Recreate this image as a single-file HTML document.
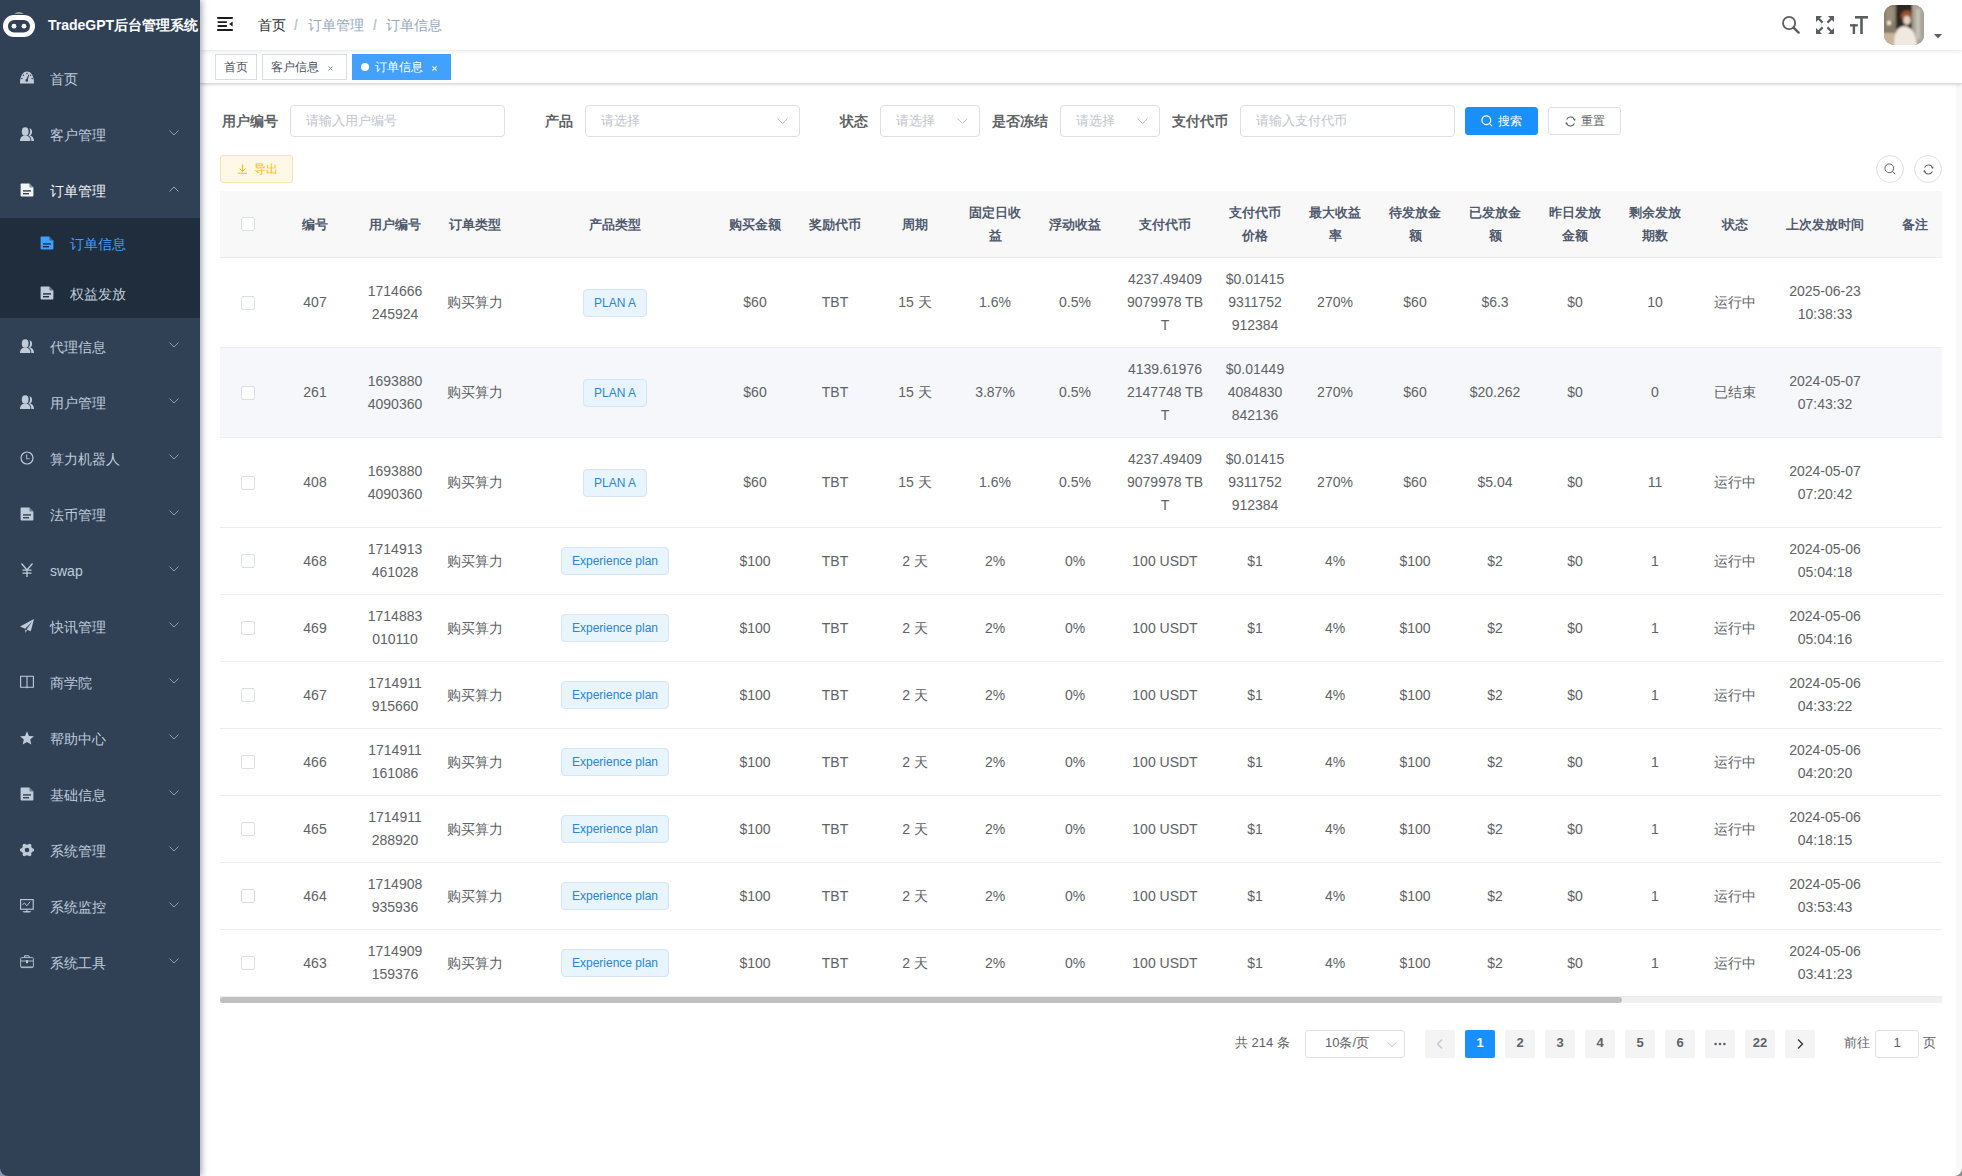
<!DOCTYPE html><html><head><meta charset="utf-8"><title>TradeGPT</title><style>
*{box-sizing:border-box}
html,body{margin:0;padding:0}
body{width:1962px;height:1176px;overflow:hidden;position:relative;background:#fff;font-family:"Liberation Sans",sans-serif;color:#606266}
.a{position:absolute}
#sb{left:0;top:0;width:200px;height:1176px;background:#304156;box-shadow:2px 0 6px rgba(0,21,41,.35);z-index:5}
.mi{position:absolute;left:0;width:200px;height:56px;color:#bfcbd9;font-size:14px}
.mi .ic{position:absolute;left:20px;top:21px;width:14px;height:14px}
.mi .tx{position:absolute;left:50px;top:1px;line-height:56px;white-space:nowrap}
.mi .ar{position:absolute;left:169px;top:24px;width:10px;height:6px}
.smi{position:absolute;left:0;width:200px;height:50px;color:#bfcbd9;font-size:14px}
.smi .ic{position:absolute;left:40px;top:18px;width:14px;height:14px}
.smi .tx{position:absolute;left:70px;top:1px;line-height:50px;white-space:nowrap}
#nb{left:200px;top:0;width:1762px;height:50px;background:#fff;box-shadow:0 1px 4px rgba(0,21,41,.12);z-index:3}
#tv{left:200px;top:50px;width:1762px;height:34px;background:#fff;border-bottom:1px solid #d9dadc;box-shadow:0 1px 3px 0 rgba(0,0,0,.12),0 0 3px 0 rgba(0,0,0,.04);z-index:2}
.tag{position:absolute;top:4px;height:26px;border:1px solid #d8dce5;color:#495060;background:#fff;font-size:12px;line-height:25px;padding:0 8px;white-space:nowrap}
.tag.act{background:#42a0ff;border-color:#42a0ff;color:#fff}
.lbl{position:absolute;top:105px;height:32px;line-height:32px;font-size:14px;font-weight:bold;color:#606266;white-space:nowrap}
.inp{position:absolute;top:105px;height:32px;border:1px solid #dcdfe6;border-radius:4px;background:#fff;font-size:13px;color:#c0c4cc;line-height:30px;padding-left:15px;white-space:nowrap}
.inp .ar{position:absolute;right:11px;top:12px;width:11px;height:6px}
.btn{position:absolute;height:28px;border-radius:3px;font-size:12px;line-height:26px;white-space:nowrap;border:1px solid #dcdfe6}
.circ{position:absolute;top:155px;width:28px;height:28px;border:1px solid #dcdfe6;border-radius:50%;background:#fff}
#tbl{left:220px;top:191px;width:1722px;height:812px;overflow:hidden}
.row{position:absolute;left:0;width:1735px;display:flex;border-bottom:1px solid #ebeef5;background:#fff}
.row.hd{background:#f8f8f9;color:#515a6e;font-weight:bold;font-size:13px}
.row.hv{background:#f5f7fa}
.c{display:flex;align-items:center;justify-content:center;text-align:center;line-height:23px;font-size:14px;color:#606266;flex:none}
.hd .c{font-size:13px;color:#515a6e;font-weight:bold}
.cb{width:14px;height:14px;border:1px solid #dcdfe6;border-radius:2px;background:#fff}
.etag{display:inline-block;height:28px;line-height:26px;padding:0 10px;font-size:12px;color:#2a86d4;background:#e8f4fe;border:1px solid #d5e5f3;border-radius:4px;white-space:nowrap}
.pg{position:absolute;top:1030px;height:28px;line-height:26px;font-size:13px;color:#606266;white-space:nowrap}
.pb{position:absolute;top:1030px;width:30px;height:28px;line-height:26px;background:#f4f4f5;border-radius:2px;text-align:center;font-size:13px;font-weight:bold;color:#606266}
.pb.on{background:#1890ff;color:#fff}
</style></head><body>
<div id="sb" class="a">
<svg class="a" style="left:2px;top:11px" width="34" height="28" viewBox="0 0 34 28"><path d="M12 2.5 Q17 0.6 22 2.5Z" fill="#fff"/><rect x="1" y="4" width="32" height="22" rx="11" ry="11" fill="#fff"/><rect x="6" y="9" width="22" height="12.5" rx="6.25" fill="#304156"/><circle cx="12" cy="15.2" r="2.4" fill="#fff"/><circle cx="22" cy="15.2" r="2.4" fill="#fff"/></svg>
<div class="a" style="left:48px;top:0;line-height:50px;font-size:14px;font-weight:bold;color:#fff;white-space:nowrap">TradeGPT后台管理系统</div>
<div class="mi" style="top:50px;color:#bfcbd9"><svg class="ic" viewBox="0 0 14 14"><path d="M0 12.4 C0 4.8 3 0.6 7 0.6 C11 0.6 14 4.8 14 12.4 Z" fill="#bfcbd9"/><g fill="#304156"><circle cx="7" cy="2.6" r="0.75"/><circle cx="3.4" cy="4.2" r="0.75"/><circle cx="10.6" cy="4.2" r="0.75"/><circle cx="1.9" cy="7.6" r="0.75"/><circle cx="12.1" cy="7.6" r="0.75"/><circle cx="6.8" cy="9.4" r="1.3"/><path d="M6.1 9.2 L8.4 3.6 L9.1 3.9 L7.5 9.7Z"/></g></svg><div class="tx">首页</div></div>
<div class="mi" style="top:106px;color:#bfcbd9"><svg class="ic" viewBox="0 0 14 14"><g fill="#bfcbd9"><ellipse cx="5.2" cy="4.5" rx="3.4" ry="4.3"/><path d="M0 14 C0 10 2.5 8.5 5.2 8.5 C8 8.5 10.4 10 10.4 14Z"/><path d="M9.5 1.2 C11.2 1.6 12.6 3.2 12 6 C11.6 7.4 10.8 8 10.2 8.4 C12.4 9 14 10.8 14 14 L11.4 14 C11.2 11 10.2 9.2 8.4 8.4 C9.6 7.4 10.4 5.6 10 3.2Z"/></g></svg><div class="tx">客户管理</div><svg class="ar" viewBox="0 0 10 6"><path d="M0.5 0.5 L5 5 L9.5 0.5" fill="none" stroke="#8e9aab" stroke-width="1"/></svg></div>
<div class="mi" style="top:162px;color:#f4f4f5"><svg class="ic" viewBox="0 0 14 14"><path d="M1.5 0.6 Q0.6 0.6 0.6 1.6 L0.6 12.6 Q0.6 13.6 1.6 13.6 L12.4 13.6 Q13.4 13.6 13.4 12.6 L13.4 4.6 L9.4 0.6Z" fill="#f4f4f5"/><path d="M9.4 0.6 L9.4 3.8 Q9.4 4.6 10.2 4.6 L13.4 4.6" fill="#304156" opacity="0.55"/><rect x="3" y="7.2" width="8" height="1.4" fill="#304156"/><rect x="3" y="10" width="6" height="1.4" fill="#304156"/></svg><div class="tx">订单管理</div><svg class="ar" viewBox="0 0 10 6"><path d="M0.5 5.5 L5 1 L9.5 5.5" fill="none" stroke="#9aa6b6" stroke-width="1"/></svg></div>
<div class="a" style="left:0;top:218px;width:200px;height:100px;background:#1f2d3d"></div>
<div class="smi" style="top:218px;color:#409eff"><svg class="ic" viewBox="0 0 14 14"><path d="M1.5 0.6 Q0.6 0.6 0.6 1.6 L0.6 12.6 Q0.6 13.6 1.6 13.6 L12.4 13.6 Q13.4 13.6 13.4 12.6 L13.4 4.6 L9.4 0.6Z" fill="#409eff"/><path d="M9.4 0.6 L9.4 3.8 Q9.4 4.6 10.2 4.6 L13.4 4.6" fill="#1f2d3d" opacity="0.55"/><rect x="3" y="7.2" width="8" height="1.4" fill="#1f2d3d"/><rect x="3" y="10" width="6" height="1.4" fill="#1f2d3d"/></svg><div class="tx">订单信息</div></div>
<div class="smi" style="top:268px"><svg class="ic" viewBox="0 0 14 14"><path d="M1.5 0.6 Q0.6 0.6 0.6 1.6 L0.6 12.6 Q0.6 13.6 1.6 13.6 L12.4 13.6 Q13.4 13.6 13.4 12.6 L13.4 4.6 L9.4 0.6Z" fill="#bfcbd9"/><path d="M9.4 0.6 L9.4 3.8 Q9.4 4.6 10.2 4.6 L13.4 4.6" fill="#1f2d3d" opacity="0.55"/><rect x="3" y="7.2" width="8" height="1.4" fill="#1f2d3d"/><rect x="3" y="10" width="6" height="1.4" fill="#1f2d3d"/></svg><div class="tx">权益发放</div></div>
<div class="mi" style="top:318px;color:#bfcbd9"><svg class="ic" viewBox="0 0 14 14"><g fill="#bfcbd9"><ellipse cx="5.2" cy="4.5" rx="3.4" ry="4.3"/><path d="M0 14 C0 10 2.5 8.5 5.2 8.5 C8 8.5 10.4 10 10.4 14Z"/><path d="M9.5 1.2 C11.2 1.6 12.6 3.2 12 6 C11.6 7.4 10.8 8 10.2 8.4 C12.4 9 14 10.8 14 14 L11.4 14 C11.2 11 10.2 9.2 8.4 8.4 C9.6 7.4 10.4 5.6 10 3.2Z"/></g></svg><div class="tx">代理信息</div><svg class="ar" viewBox="0 0 10 6"><path d="M0.5 0.5 L5 5 L9.5 0.5" fill="none" stroke="#8e9aab" stroke-width="1"/></svg></div>
<div class="mi" style="top:374px;color:#bfcbd9"><svg class="ic" viewBox="0 0 14 14"><g fill="#bfcbd9"><ellipse cx="5.2" cy="4.5" rx="3.4" ry="4.3"/><path d="M0 14 C0 10 2.5 8.5 5.2 8.5 C8 8.5 10.4 10 10.4 14Z"/><path d="M9.5 1.2 C11.2 1.6 12.6 3.2 12 6 C11.6 7.4 10.8 8 10.2 8.4 C12.4 9 14 10.8 14 14 L11.4 14 C11.2 11 10.2 9.2 8.4 8.4 C9.6 7.4 10.4 5.6 10 3.2Z"/></g></svg><div class="tx">用户管理</div><svg class="ar" viewBox="0 0 10 6"><path d="M0.5 0.5 L5 5 L9.5 0.5" fill="none" stroke="#8e9aab" stroke-width="1"/></svg></div>
<div class="mi" style="top:430px;color:#bfcbd9"><svg class="ic" viewBox="0 0 14 14"><circle cx="7" cy="7" r="6" fill="none" stroke="#bfcbd9" stroke-width="1.2"/><path d="M6.6 3.6 L6.6 7.8 L9.6 7.8" fill="none" stroke="#bfcbd9" stroke-width="1.1" opacity="0.8"/></svg><div class="tx">算力机器人</div><svg class="ar" viewBox="0 0 10 6"><path d="M0.5 0.5 L5 5 L9.5 0.5" fill="none" stroke="#8e9aab" stroke-width="1"/></svg></div>
<div class="mi" style="top:486px;color:#bfcbd9"><svg class="ic" viewBox="0 0 14 14"><path d="M1.5 0.6 Q0.6 0.6 0.6 1.6 L0.6 12.6 Q0.6 13.6 1.6 13.6 L12.4 13.6 Q13.4 13.6 13.4 12.6 L13.4 4.6 L9.4 0.6Z" fill="#bfcbd9"/><path d="M9.4 0.6 L9.4 3.8 Q9.4 4.6 10.2 4.6 L13.4 4.6" fill="#304156" opacity="0.55"/><rect x="3" y="7.2" width="8" height="1.4" fill="#304156"/><rect x="3" y="10" width="6" height="1.4" fill="#304156"/></svg><div class="tx">法币管理</div><svg class="ar" viewBox="0 0 10 6"><path d="M0.5 0.5 L5 5 L9.5 0.5" fill="none" stroke="#8e9aab" stroke-width="1"/></svg></div>
<div class="mi" style="top:542px;color:#bfcbd9"><svg class="ic" viewBox="0 0 14 14"><path d="M1.5 0.5 L7 7 L12.5 0.5 M7 7 L7 14 M2.5 7.2 L11.5 7.2 M2.5 10.2 L11.5 10.2" fill="none" stroke="#bfcbd9" stroke-width="1.3"/></svg><div class="tx">swap</div><svg class="ar" viewBox="0 0 10 6"><path d="M0.5 0.5 L5 5 L9.5 0.5" fill="none" stroke="#8e9aab" stroke-width="1"/></svg></div>
<div class="mi" style="top:598px;color:#bfcbd9"><svg class="ic" viewBox="0 0 14 14"><path d="M0 7.5 L14 0 L10.8 12.2 L6.6 10.4 L12.2 2.6 L5.2 9.8 Z M5.4 10.6 L5.2 14 L7 11.4Z" fill="#bfcbd9"/></svg><div class="tx">快讯管理</div><svg class="ar" viewBox="0 0 10 6"><path d="M0.5 0.5 L5 5 L9.5 0.5" fill="none" stroke="#8e9aab" stroke-width="1"/></svg></div>
<div class="mi" style="top:654px;color:#bfcbd9"><svg class="ic" viewBox="0 0 14 14"><path d="M0.6 1.2 L6.2 1.2 Q7 1.2 7 2 L7 12.8 Q7 12.2 6.2 12.2 L0.6 12.2 Z M13.4 1.2 L7.8 1.2 Q7 1.2 7 2 L7 12.8 Q7 12.2 7.8 12.2 L13.4 12.2 Z" fill="none" stroke="#bfcbd9" stroke-width="1.1" stroke-linejoin="round"/></svg><div class="tx">商学院</div><svg class="ar" viewBox="0 0 10 6"><path d="M0.5 0.5 L5 5 L9.5 0.5" fill="none" stroke="#8e9aab" stroke-width="1"/></svg></div>
<div class="mi" style="top:710px;color:#bfcbd9"><svg class="ic" viewBox="0 0 14 14"><path d="M7 0.3 L9 4.9 L13.9 5.3 L10.2 8.6 L11.3 13.5 L7 10.9 L2.7 13.5 L3.8 8.6 L0.1 5.3 L5 4.9Z" fill="#bfcbd9"/></svg><div class="tx">帮助中心</div><svg class="ar" viewBox="0 0 10 6"><path d="M0.5 0.5 L5 5 L9.5 0.5" fill="none" stroke="#8e9aab" stroke-width="1"/></svg></div>
<div class="mi" style="top:766px;color:#bfcbd9"><svg class="ic" viewBox="0 0 14 14"><path d="M1.5 0.6 Q0.6 0.6 0.6 1.6 L0.6 12.6 Q0.6 13.6 1.6 13.6 L12.4 13.6 Q13.4 13.6 13.4 12.6 L13.4 4.6 L9.4 0.6Z" fill="#bfcbd9"/><path d="M9.4 0.6 L9.4 3.8 Q9.4 4.6 10.2 4.6 L13.4 4.6" fill="#304156" opacity="0.55"/><rect x="3" y="7.2" width="8" height="1.4" fill="#304156"/><rect x="3" y="10" width="6" height="1.4" fill="#304156"/></svg><div class="tx">基础信息</div><svg class="ar" viewBox="0 0 10 6"><path d="M0.5 0.5 L5 5 L9.5 0.5" fill="none" stroke="#8e9aab" stroke-width="1"/></svg></div>
<div class="mi" style="top:822px;color:#bfcbd9"><svg class="ic" viewBox="0 0 14 14"><g fill="#bfcbd9"><circle cx="7" cy="7" r="5.4"/><circle cx="12.30" cy="7.00" r="1.75"/><circle cx="9.65" cy="11.59" r="1.75"/><circle cx="4.35" cy="11.59" r="1.75"/><circle cx="1.70" cy="7.00" r="1.75"/><circle cx="4.35" cy="2.41" r="1.75"/><circle cx="9.65" cy="2.41" r="1.75"/></g><circle cx="7" cy="7" r="2.3" fill="#304156"/></svg><div class="tx">系统管理</div><svg class="ar" viewBox="0 0 10 6"><path d="M0.5 0.5 L5 5 L9.5 0.5" fill="none" stroke="#8e9aab" stroke-width="1"/></svg></div>
<div class="mi" style="top:878px;color:#bfcbd9"><svg class="ic" viewBox="0 0 14 14"><rect x="0.6" y="0.6" width="12.6" height="9.6" fill="none" stroke="#bfcbd9" stroke-width="1.1"/><path d="M2.4 6 L4.4 3.8 L6.8 6.8 L10.2 2.6" fill="none" stroke="#bfcbd9" stroke-width="0.9"/><path d="M6.9 10.2 L6.9 12.6" stroke="#bfcbd9" stroke-width="1"/><ellipse cx="6.9" cy="12.8" rx="4.4" ry="0.8" fill="#bfcbd9"/></svg><div class="tx">系统监控</div><svg class="ar" viewBox="0 0 10 6"><path d="M0.5 0.5 L5 5 L9.5 0.5" fill="none" stroke="#8e9aab" stroke-width="1"/></svg></div>
<div class="mi" style="top:934px;color:#bfcbd9"><svg class="ic" viewBox="0 0 14 14"><path d="M4.6 2.6 L4.6 0.8 L8.8 0.8 L9.6 2.6" fill="none" stroke="#bfcbd9" stroke-width="1"/><rect x="0.6" y="2.6" width="12.8" height="10" rx="1" fill="none" stroke="#bfcbd9" stroke-width="1" opacity="0.85"/><path d="M0.8 6 L13.2 6" stroke="#bfcbd9" stroke-width="0.9"/><rect x="6" y="5.2" width="2" height="3" fill="#bfcbd9"/><rect x="1" y="11.2" width="12" height="1.4" fill="#bfcbd9" opacity="0.6"/></svg><div class="tx">系统工具</div><svg class="ar" viewBox="0 0 10 6"><path d="M0.5 0.5 L5 5 L9.5 0.5" fill="none" stroke="#8e9aab" stroke-width="1"/></svg></div>
</div>
<div id="nb" class="a">
<svg class="a" style="left:17px;top:17px" width="16" height="14" viewBox="0 0 16 14"><g fill="#1d1d1d"><rect x="0" y="0" width="16" height="1.9" rx="0.8"/><rect x="0.4" y="4.2" width="9.8" height="1.7" rx="0.8"/><rect x="0.4" y="8.1" width="9.8" height="1.8" rx="0.8"/><rect x="0" y="12.1" width="16" height="1.9" rx="0.8"/><path d="M15.6 4.4 L12.2 7 L15.6 9.5Z"/></g></svg>
<div class="a" style="left:58px;top:0;line-height:50px;font-size:14px;color:#303133;white-space:nowrap">首页</div>
<div class="a" style="left:94px;top:0;line-height:50px;font-size:14px;color:#c0c4cc;font-weight:bold">/</div>
<div class="a" style="left:108px;top:0;line-height:50px;font-size:14px;color:#97a8be;white-space:nowrap">订单管理</div>
<div class="a" style="left:173px;top:0;line-height:50px;font-size:14px;color:#c0c4cc;font-weight:bold">/</div>
<div class="a" style="left:186px;top:0;line-height:50px;font-size:14px;color:#97a8be;white-space:nowrap">订单信息</div>
<svg class="a" style="left:1582px;top:16px" width="18" height="18" viewBox="0 0 18 18"><circle cx="7.1" cy="7" r="6.1" fill="none" stroke="#5b5d61" stroke-width="1.8"/><path d="M11.6 11.6 L16.6 16.6" stroke="#5b5d61" stroke-width="2.4" stroke-linecap="round"/></svg>
<svg class="a" style="left:1616px;top:16px" width="18" height="18" viewBox="0 0 18 18"><g fill="#5b5d61"><path d="M0 0 L6 0 L0 6Z M18 0 L12 0 L18 6Z M0 18 L6 18 L0 12Z M18 18 L12 18 L18 12Z"/></g><g stroke="#5b5d61" stroke-width="2.2"><path d="M2 2 L6.6 6.6 M16 2 L11.4 6.6 M2 16 L6.6 11.4 M16 16 L11.4 11.4"/></g></svg>
<svg class="a" style="left:1650px;top:16px" width="18" height="18" viewBox="0 0 18 18"><g fill="#5b5d61"><rect x="5" y="0" width="13" height="2.6"/><rect x="10.2" y="0" width="2.6" height="18"/><rect x="0" y="8.2" width="7.8" height="2.3"/><rect x="2.7" y="8.2" width="2.4" height="9.8"/></g></svg>
<svg class="a" style="left:1684px;top:5px" width="40" height="40" viewBox="0 0 40 40"><defs><clipPath id="avc"><rect width="40" height="40" rx="10"/></clipPath><filter id="avb" x="-10%" y="-10%" width="120%" height="120%"><feGaussianBlur stdDeviation="0.9"/></filter></defs><g clip-path="url(#avc)"><rect width="40" height="40" fill="#8c8270"/><g filter="url(#avb)"><rect x="-2" y="-2" width="16" height="44" fill="#867a68"/><rect x="2" y="2" width="8" height="14" fill="#9a8f7c"/><rect x="12" y="-2" width="18" height="26" fill="#2e2620"/><rect x="28" y="-2" width="14" height="44" fill="#a8a498"/><rect x="32" y="4" width="4" height="30" fill="#c6c2b6"/><rect x="-2" y="28" width="16" height="14" fill="#c8b49a"/><circle cx="5" cy="18" r="2.2" fill="#f4ecd8"/><path d="M10 42 C10 30 12 22 20 21 C28 22 32 28 33 42Z" fill="#f0e9e0"/><ellipse cx="23" cy="15" rx="3.8" ry="5" fill="#e6d0c0"/><path d="M17 14 C16 8 20 5 24 5.5 C28 6.5 28.5 11 27 14 C25 10 21 9.5 17 14Z" fill="#9a5530"/></g></g></svg>
<svg class="a" style="left:1734px;top:34px" width="8" height="5" viewBox="0 0 8 5"><path d="M0 0 L8 0 L4 4.5Z" fill="#5a5e66"/></svg>
</div>
<div id="tv" class="a">
<div class="tag" style="left:15px">首页</div>
<div class="tag" style="left:62px;width:85px">客户信息<svg style="position:absolute;left:65px;top:11px" width="5" height="5" viewBox="0 0 5 5"><path d="M0.4 0.4 L4.6 4.6 M4.6 0.4 L0.4 4.6" stroke="#8a8f99" stroke-width="1"/></svg></div>
<div class="tag act" style="left:152px;width:99px"><span style="display:inline-block;width:8px;height:8px;border-radius:50%;background:#fff;margin-right:6px;vertical-align:0px"></span>订单信息<svg style="position:absolute;left:79px;top:11px" width="5" height="5" viewBox="0 0 5 5"><path d="M0.4 0.4 L4.6 4.6 M4.6 0.4 L0.4 4.6" stroke="#fff" stroke-width="1.1"/></svg></div>
</div>
<div class="lbl" style="left:222px">用户编号</div>
<div class="inp" style="left:290px;width:215px">请输入用户编号</div>
<div class="lbl" style="left:545px">产品</div>
<div class="inp" style="left:585px;width:215px">请选择<svg class="ar" viewBox="0 0 11 6"><path d="M0.5 0.5 L5.5 5.5 L10.5 0.5" fill="none" stroke="#c0c4cc" stroke-width="1"/></svg></div>
<div class="lbl" style="left:840px">状态</div>
<div class="inp" style="left:880px;width:100px">请选择<svg class="ar" viewBox="0 0 11 6"><path d="M0.5 0.5 L5.5 5.5 L10.5 0.5" fill="none" stroke="#c0c4cc" stroke-width="1"/></svg></div>
<div class="lbl" style="left:992px">是否冻结</div>
<div class="inp" style="left:1060px;width:100px">请选择<svg class="ar" viewBox="0 0 11 6"><path d="M0.5 0.5 L5.5 5.5 L10.5 0.5" fill="none" stroke="#c0c4cc" stroke-width="1"/></svg></div>
<div class="lbl" style="left:1172px">支付代币</div>
<div class="inp" style="left:1240px;width:215px">请输入支付代币</div>
<div class="btn" style="left:1465px;top:107px;width:73px;background:#1890ff;border-color:#1890ff;color:#fff"><svg class="a" style="left:15px;top:7px" width="12" height="12" viewBox="0 0 12 12"><circle cx="5.3" cy="5.3" r="4.4" fill="none" stroke="#fff" stroke-width="1.2"/><path d="M8.4 8.4 L10.8 10.8" stroke="#fff" stroke-width="1.2" stroke-linecap="round"/></svg><span class="a" style="left:32px;top:0">搜索</span></div>
<div class="btn" style="left:1548px;top:107px;width:73px;background:#fff;color:#606266"><svg class="a" style="left:16px;top:8px" width="11" height="11" viewBox="0 0 11 11"><path d="M9.6 4.2 A4.3 4.3 0 0 0 1.6 3.4" fill="none" stroke="#606266" stroke-width="1.1"/><path d="M1.4 6.8 A4.3 4.3 0 0 0 9.4 7.6" fill="none" stroke="#606266" stroke-width="1.1"/><path d="M8.2 3.6 L10 5 L10.6 2.8Z" fill="#606266"/><path d="M2.8 7.4 L1 6 L0.4 8.2Z" fill="#606266"/></svg><span class="a" style="left:32px;top:0">重置</span></div>
<div class="btn" style="left:220px;top:155px;width:73px;background:#fff8e6;border-color:#f7e4b4;color:#ffba00"><svg class="a" style="left:16px;top:8px" width="11" height="10" viewBox="0 0 11 10"><path d="M5.5 0.5 L5.5 7.4 M2.6 4.6 L5.5 7.4 L8.4 4.6 M1 9.2 L10 9.2" fill="none" stroke="#f5b818" stroke-width="1"/></svg><span class="a" style="left:33px;top:0">导出</span></div>
<div class="circ" style="left:1876px"><svg class="a" style="left:7px;top:7px" width="12" height="12" viewBox="0 0 12 12"><circle cx="5.3" cy="5.3" r="4.4" fill="none" stroke="#606266" stroke-width="1.0"/><path d="M8.4 8.4 L10.8 10.8" stroke="#606266" stroke-width="1.0" stroke-linecap="round"/></svg></div>
<div class="circ" style="left:1914px"><svg class="a" style="left:8px;top:8px" width="11" height="11" viewBox="0 0 11 11"><path d="M9.6 4.2 A4.3 4.3 0 0 0 1.6 3.4" fill="none" stroke="#606266" stroke-width="1.1"/><path d="M1.4 6.8 A4.3 4.3 0 0 0 9.4 7.6" fill="none" stroke="#606266" stroke-width="1.1"/><path d="M8.2 3.6 L10 5 L10.6 2.8Z" fill="#606266"/><path d="M2.8 7.4 L1 6 L0.4 8.2Z" fill="#606266"/></svg></div>
<div id="tbl" class="a">
<div class="row hd" style="top:0;height:67px"><div class="c" style="width:55px"><div class="cb"></div></div><div class="c" style="width:80px">编号</div><div class="c" style="width:80px">用户编号</div><div class="c" style="width:80px">订单类型</div><div class="c" style="width:200px">产品类型</div><div class="c" style="width:80px">购买金额</div><div class="c" style="width:80px">奖励代币</div><div class="c" style="width:80px">周期</div><div class="c" style="width:80px">固定日收<br>益</div><div class="c" style="width:80px">浮动收益</div><div class="c" style="width:100px">支付代币</div><div class="c" style="width:80px">支付代币<br>价格</div><div class="c" style="width:80px">最大收益<br>率</div><div class="c" style="width:80px">待发放金<br>额</div><div class="c" style="width:80px">已发放金<br>额</div><div class="c" style="width:80px">昨日发放<br>金额</div><div class="c" style="width:80px">剩余发放<br>期数</div><div class="c" style="width:80px">状态</div><div class="c" style="width:100px">上次发放时间</div><div class="c" style="width:80px">备注</div></div>
<div class="row" style="top:67px;height:90px"><div class="c" style="width:55px"><div class="cb"></div></div><div class="c" style="width:80px">407</div><div class="c" style="width:80px">1714666<br>245924</div><div class="c" style="width:80px">购买算力</div><div class="c" style="width:200px"><span class="etag">PLAN A</span></div><div class="c" style="width:80px">$60</div><div class="c" style="width:80px">TBT</div><div class="c" style="width:80px">15 天</div><div class="c" style="width:80px">1.6%</div><div class="c" style="width:80px">0.5%</div><div class="c" style="width:100px">4237.49409<br>9079978 TB<br>T</div><div class="c" style="width:80px">$0.01415<br>9311752<br>912384</div><div class="c" style="width:80px">270%</div><div class="c" style="width:80px">$60</div><div class="c" style="width:80px">$6.3</div><div class="c" style="width:80px">$0</div><div class="c" style="width:80px">10</div><div class="c" style="width:80px">运行中</div><div class="c" style="width:100px">2025-06-23<br>10:38:33</div><div class="c" style="width:80px"></div></div>
<div class="row hv" style="top:157px;height:90px"><div class="c" style="width:55px"><div class="cb"></div></div><div class="c" style="width:80px">261</div><div class="c" style="width:80px">1693880<br>4090360</div><div class="c" style="width:80px">购买算力</div><div class="c" style="width:200px"><span class="etag">PLAN A</span></div><div class="c" style="width:80px">$60</div><div class="c" style="width:80px">TBT</div><div class="c" style="width:80px">15 天</div><div class="c" style="width:80px">3.87%</div><div class="c" style="width:80px">0.5%</div><div class="c" style="width:100px">4139.61976<br>2147748 TB<br>T</div><div class="c" style="width:80px">$0.01449<br>4084830<br>842136</div><div class="c" style="width:80px">270%</div><div class="c" style="width:80px">$60</div><div class="c" style="width:80px">$20.262</div><div class="c" style="width:80px">$0</div><div class="c" style="width:80px">0</div><div class="c" style="width:80px">已结束</div><div class="c" style="width:100px">2024-05-07<br>07:43:32</div><div class="c" style="width:80px"></div></div>
<div class="row" style="top:247px;height:90px"><div class="c" style="width:55px"><div class="cb"></div></div><div class="c" style="width:80px">408</div><div class="c" style="width:80px">1693880<br>4090360</div><div class="c" style="width:80px">购买算力</div><div class="c" style="width:200px"><span class="etag">PLAN A</span></div><div class="c" style="width:80px">$60</div><div class="c" style="width:80px">TBT</div><div class="c" style="width:80px">15 天</div><div class="c" style="width:80px">1.6%</div><div class="c" style="width:80px">0.5%</div><div class="c" style="width:100px">4237.49409<br>9079978 TB<br>T</div><div class="c" style="width:80px">$0.01415<br>9311752<br>912384</div><div class="c" style="width:80px">270%</div><div class="c" style="width:80px">$60</div><div class="c" style="width:80px">$5.04</div><div class="c" style="width:80px">$0</div><div class="c" style="width:80px">11</div><div class="c" style="width:80px">运行中</div><div class="c" style="width:100px">2024-05-07<br>07:20:42</div><div class="c" style="width:80px"></div></div>
<div class="row" style="top:337px;height:67px"><div class="c" style="width:55px"><div class="cb"></div></div><div class="c" style="width:80px">468</div><div class="c" style="width:80px">1714913<br>461028</div><div class="c" style="width:80px">购买算力</div><div class="c" style="width:200px"><span class="etag">Experience plan</span></div><div class="c" style="width:80px">$100</div><div class="c" style="width:80px">TBT</div><div class="c" style="width:80px">2 天</div><div class="c" style="width:80px">2%</div><div class="c" style="width:80px">0%</div><div class="c" style="width:100px">100 USDT</div><div class="c" style="width:80px">$1</div><div class="c" style="width:80px">4%</div><div class="c" style="width:80px">$100</div><div class="c" style="width:80px">$2</div><div class="c" style="width:80px">$0</div><div class="c" style="width:80px">1</div><div class="c" style="width:80px">运行中</div><div class="c" style="width:100px">2024-05-06<br>05:04:18</div><div class="c" style="width:80px"></div></div>
<div class="row" style="top:404px;height:67px"><div class="c" style="width:55px"><div class="cb"></div></div><div class="c" style="width:80px">469</div><div class="c" style="width:80px">1714883<br>010110</div><div class="c" style="width:80px">购买算力</div><div class="c" style="width:200px"><span class="etag">Experience plan</span></div><div class="c" style="width:80px">$100</div><div class="c" style="width:80px">TBT</div><div class="c" style="width:80px">2 天</div><div class="c" style="width:80px">2%</div><div class="c" style="width:80px">0%</div><div class="c" style="width:100px">100 USDT</div><div class="c" style="width:80px">$1</div><div class="c" style="width:80px">4%</div><div class="c" style="width:80px">$100</div><div class="c" style="width:80px">$2</div><div class="c" style="width:80px">$0</div><div class="c" style="width:80px">1</div><div class="c" style="width:80px">运行中</div><div class="c" style="width:100px">2024-05-06<br>05:04:16</div><div class="c" style="width:80px"></div></div>
<div class="row" style="top:471px;height:67px"><div class="c" style="width:55px"><div class="cb"></div></div><div class="c" style="width:80px">467</div><div class="c" style="width:80px">1714911<br>915660</div><div class="c" style="width:80px">购买算力</div><div class="c" style="width:200px"><span class="etag">Experience plan</span></div><div class="c" style="width:80px">$100</div><div class="c" style="width:80px">TBT</div><div class="c" style="width:80px">2 天</div><div class="c" style="width:80px">2%</div><div class="c" style="width:80px">0%</div><div class="c" style="width:100px">100 USDT</div><div class="c" style="width:80px">$1</div><div class="c" style="width:80px">4%</div><div class="c" style="width:80px">$100</div><div class="c" style="width:80px">$2</div><div class="c" style="width:80px">$0</div><div class="c" style="width:80px">1</div><div class="c" style="width:80px">运行中</div><div class="c" style="width:100px">2024-05-06<br>04:33:22</div><div class="c" style="width:80px"></div></div>
<div class="row" style="top:538px;height:67px"><div class="c" style="width:55px"><div class="cb"></div></div><div class="c" style="width:80px">466</div><div class="c" style="width:80px">1714911<br>161086</div><div class="c" style="width:80px">购买算力</div><div class="c" style="width:200px"><span class="etag">Experience plan</span></div><div class="c" style="width:80px">$100</div><div class="c" style="width:80px">TBT</div><div class="c" style="width:80px">2 天</div><div class="c" style="width:80px">2%</div><div class="c" style="width:80px">0%</div><div class="c" style="width:100px">100 USDT</div><div class="c" style="width:80px">$1</div><div class="c" style="width:80px">4%</div><div class="c" style="width:80px">$100</div><div class="c" style="width:80px">$2</div><div class="c" style="width:80px">$0</div><div class="c" style="width:80px">1</div><div class="c" style="width:80px">运行中</div><div class="c" style="width:100px">2024-05-06<br>04:20:20</div><div class="c" style="width:80px"></div></div>
<div class="row" style="top:605px;height:67px"><div class="c" style="width:55px"><div class="cb"></div></div><div class="c" style="width:80px">465</div><div class="c" style="width:80px">1714911<br>288920</div><div class="c" style="width:80px">购买算力</div><div class="c" style="width:200px"><span class="etag">Experience plan</span></div><div class="c" style="width:80px">$100</div><div class="c" style="width:80px">TBT</div><div class="c" style="width:80px">2 天</div><div class="c" style="width:80px">2%</div><div class="c" style="width:80px">0%</div><div class="c" style="width:100px">100 USDT</div><div class="c" style="width:80px">$1</div><div class="c" style="width:80px">4%</div><div class="c" style="width:80px">$100</div><div class="c" style="width:80px">$2</div><div class="c" style="width:80px">$0</div><div class="c" style="width:80px">1</div><div class="c" style="width:80px">运行中</div><div class="c" style="width:100px">2024-05-06<br>04:18:15</div><div class="c" style="width:80px"></div></div>
<div class="row" style="top:672px;height:67px"><div class="c" style="width:55px"><div class="cb"></div></div><div class="c" style="width:80px">464</div><div class="c" style="width:80px">1714908<br>935936</div><div class="c" style="width:80px">购买算力</div><div class="c" style="width:200px"><span class="etag">Experience plan</span></div><div class="c" style="width:80px">$100</div><div class="c" style="width:80px">TBT</div><div class="c" style="width:80px">2 天</div><div class="c" style="width:80px">2%</div><div class="c" style="width:80px">0%</div><div class="c" style="width:100px">100 USDT</div><div class="c" style="width:80px">$1</div><div class="c" style="width:80px">4%</div><div class="c" style="width:80px">$100</div><div class="c" style="width:80px">$2</div><div class="c" style="width:80px">$0</div><div class="c" style="width:80px">1</div><div class="c" style="width:80px">运行中</div><div class="c" style="width:100px">2024-05-06<br>03:53:43</div><div class="c" style="width:80px"></div></div>
<div class="row" style="top:739px;height:67px"><div class="c" style="width:55px"><div class="cb"></div></div><div class="c" style="width:80px">463</div><div class="c" style="width:80px">1714909<br>159376</div><div class="c" style="width:80px">购买算力</div><div class="c" style="width:200px"><span class="etag">Experience plan</span></div><div class="c" style="width:80px">$100</div><div class="c" style="width:80px">TBT</div><div class="c" style="width:80px">2 天</div><div class="c" style="width:80px">2%</div><div class="c" style="width:80px">0%</div><div class="c" style="width:100px">100 USDT</div><div class="c" style="width:80px">$1</div><div class="c" style="width:80px">4%</div><div class="c" style="width:80px">$100</div><div class="c" style="width:80px">$2</div><div class="c" style="width:80px">$0</div><div class="c" style="width:80px">1</div><div class="c" style="width:80px">运行中</div><div class="c" style="width:100px">2024-05-06<br>03:41:23</div><div class="c" style="width:80px"></div></div>
<div class="a" style="left:0;top:806px;width:1722px;height:6px;background:#f1f1f1"></div>
<div class="a" style="left:0;top:806px;width:1402px;height:6px;background:#c0c0c0;border-radius:3px"></div>
</div>
<div class="pg" style="left:1235px">共 214 条</div>
<div class="a" style="left:1305px;top:1030px;width:100px;height:28px;border:1px solid #dcdfe6;border-radius:3px;font-size:13px;line-height:24px;color:#606266;padding-left:19px">10条/页<svg class="a" style="left:81px;top:11px" width="10" height="5" viewBox="0 0 10 5"><path d="M0.5 0.5 L5 4.5 L9.5 0.5" fill="none" stroke="#c0c4cc" stroke-width="1"/></svg></div>
<div class="pb" style="left:1425px"><svg class="a" style="left:11px;top:9px" width="7" height="10" viewBox="0 0 7 10"><path d="M6 0.5 L1.5 5 L6 9.5" fill="none" stroke="#c0c4cc" stroke-width="1.3"/></svg></div>
<div class="pb on" style="left:1465px">1</div>
<div class="pb" style="left:1505px">2</div>
<div class="pb" style="left:1545px">3</div>
<div class="pb" style="left:1585px">4</div>
<div class="pb" style="left:1625px">5</div>
<div class="pb" style="left:1665px">6</div>
<div class="pb" style="left:1705px"><svg width="12" height="4" viewBox="0 0 12 4" style="vertical-align:middle"><circle cx="1.6" cy="2" r="1.3" fill="#606266"/><circle cx="6" cy="2" r="1.3" fill="#606266"/><circle cx="10.4" cy="2" r="1.3" fill="#606266"/></svg></div>
<div class="pb" style="left:1745px">22</div>
<div class="pb" style="left:1785px"><svg class="a" style="left:12px;top:9px" width="7" height="10" viewBox="0 0 7 10"><path d="M1 0.5 L5.5 5 L1 9.5" fill="none" stroke="#303133" stroke-width="1.3"/></svg></div>
<div class="pg" style="left:1844px">前往</div>
<div class="a" style="left:1875px;top:1030px;width:44px;height:28px;border:1px solid #dcdfe6;border-radius:3px;font-size:13px;line-height:24px;color:#606266;text-align:center">1</div>
<div class="pg" style="left:1923px">页</div>
<div class="a" style="left:1956px;top:0;width:6px;height:1176px;background:#f9f9f9;z-index:1"></div>
<svg class="a" style="left:0;top:1168px;z-index:20" width="8" height="8" viewBox="0 0 8 8"><path d="M0 0 A8 8 0 0 0 8 8 L0 8Z" fill="#8c9bb4"/></svg>
<svg class="a" style="left:1954px;top:1168px;z-index:20" width="8" height="8" viewBox="0 0 8 8"><path d="M8 0 A8 8 0 0 1 0 8 L8 8Z" fill="#8a9096"/></svg>
</body></html>
